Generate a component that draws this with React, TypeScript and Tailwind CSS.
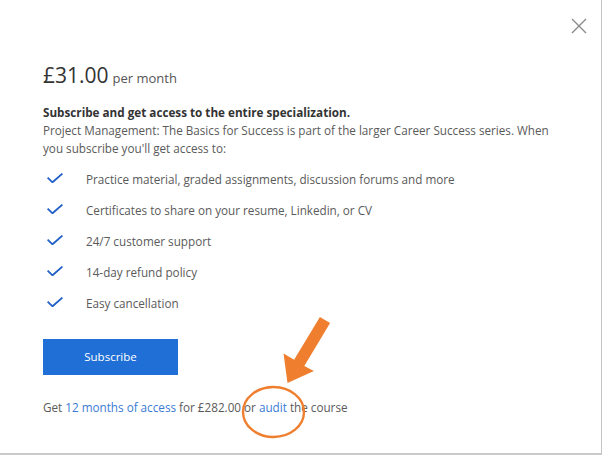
import React from 'react';

const features = [
  'Practice material, graded assignments, discussion forums and more',
  'Certificates to share on your resume, Linkedin, or CV',
  '24/7 customer support',
  '14-day refund policy',
  'Easy cancellation',
];

const Check = () => (
  <svg width="16" height="10" viewBox="0 0 16 10" className="ml-[4px] mr-[23px] mt-[3px] shrink-0">
    <path d="M0.6 4.6 L5.5 9.3 L15.4 0.6" fill="none" stroke="#2160c8" strokeWidth="1.8" strokeLinejoin="round" />
  </svg>
);

export default function App() {
  return (
    <div
      className="relative w-[602px] h-[455px] bg-white border-r border-b-2 border-r-[#c4c4c4] border-b-[#cacaca] overflow-hidden"
      style={{ fontFamily: '"Open Sans", "Noto Sans", sans-serif' }}
    >
      {/* scrollbar edge */}
      <div className="absolute right-[-1px] top-0 w-px h-[52px] bg-[#555]" />

      {/* close */}
      <button className="absolute left-[571px] top-[18px] w-[16px] h-[16px]" aria-label="Close">
        <svg width="16" height="16" viewBox="0 0 16 16">
          <path d="M1 1 L15 15 M15 1 L1 15" stroke="#8a8a8a" strokeWidth="1.4" />
        </svg>
      </button>

      <div className="pl-[43px] pt-[61px]">
        <div className="h-[28px] leading-[28px] whitespace-nowrap">
          <span className="text-[21px] text-[#333]">£31.00</span>
          <span className="text-[13px] text-[#555] ml-[4px]">per month</span>
        </div>

        <p className="mt-[14px] text-[11.7px] leading-[18px] font-bold text-[#333]">
          Subscribe and get access to the entire specialization.
        </p>
        <p className="w-[520px] text-[11.7px] leading-[18px] text-[#5a5a5a]">
          Project Management: The Basics for Success is part of the larger Career Success series. When you subscribe you'll get access to:
        </p>

        <ul className="mt-[13px] flex flex-col gap-[13px]">
          {features.map((f) => (
            <li key={f} className="flex items-start h-[18px] text-[11.7px] leading-[18px] text-[#5a5a5a] whitespace-nowrap">
              <Check />
              <span>{f}</span>
            </li>
          ))}
        </ul>

        <button className="mt-[27px] w-[135px] h-[36px] bg-[#1f6fd6] text-white text-[11.5px] font-medium">
          Subscribe
        </button>

        <p className="mt-[23px] text-[11.7px] leading-[18px] text-[#5a5a5a] whitespace-nowrap">
          Get <span className="text-[#3a7bd5]">12 months of access</span> for £282.00 or{' '}
          <span className="text-[#3a7bd5]">audit</span> the course
        </p>
      </div>

      {/* annotation overlay */}
      <svg className="absolute inset-0 pointer-events-none" width="602" height="455" viewBox="0 0 602 455">
        <polygon
          points="330.1,323.1 319.9,316.9 294.1,359.7 283.5,353.5 287.5,383 313.9,371.1 304.3,365.9"
          fill="#ef7f2e"
        />
        <ellipse cx="273.5" cy="412" rx="30.5" ry="25" fill="none" stroke="#ef7f2e" strokeWidth="2.4" />
      </svg>
    </div>
  );
}
